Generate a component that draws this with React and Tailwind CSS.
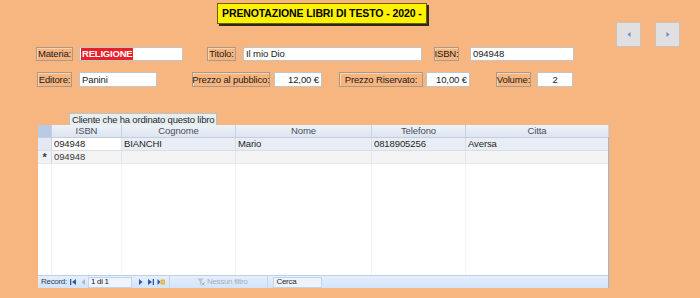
import React from "react";

const Label = ({ children, w }) => (
  <div
    className={`${w} h-full flex items-center justify-center bg-[#f6b47f] border border-[#a99a8c] shadow-[inset_1px_1px_0_#fbd3b0] text-[9.5px] tracking-[-0.15px] leading-none text-[#202020] whitespace-nowrap`}
  >
    {children}
  </div>
);

const Box = ({ children, w, align = "text-left" }) => (
  <div
    className={`${w} h-full bg-white border border-[#c4c4c4] flex items-center px-[2px] text-[9.5px] tracking-[-0.1px] leading-none text-[#202020] whitespace-nowrap ${align}`}
  >
    <span className="w-full">{children}</span>
  </div>
);

const cols = "grid grid-cols-[14px_70px_114px_136px_94px_143px]";

function NavIcon({ type }) {
  const blue = "#2f5aa8";
  if (type === "first")
    return (
      <svg width="7" height="6" viewBox="0 0 7 6">
        <rect x="0" y="0" width="1.3" height="6" fill={blue} />
        <path d="M6 0 L2 3 L6 6 Z" fill={blue} />
      </svg>
    );
  if (type === "prev")
    return (
      <svg width="5" height="6" viewBox="0 0 5 6">
        <path d="M4 0 L0.5 3 L4 6 Z" fill="#a9b8cf" />
      </svg>
    );
  if (type === "next")
    return (
      <svg width="5" height="6" viewBox="0 0 5 6">
        <path d="M1 0 L4.5 3 L1 6 Z" fill={blue} />
      </svg>
    );
  if (type === "last")
    return (
      <svg width="7" height="6" viewBox="0 0 7 6">
        <path d="M1 0 L5 3 L1 6 Z" fill={blue} />
        <rect x="5.7" y="0" width="1.3" height="6" fill={blue} />
      </svg>
    );
  return (
    <svg width="8" height="6" viewBox="0 0 8 6">
      <path d="M0.5 0 L3.5 3 L0.5 6 Z" fill={blue} />
      <rect x="4" y="1" width="4" height="4" fill="#f2c94c" stroke="#c99a1a" strokeWidth="0.6" />
    </svg>
  );
}

export default function App() {
  return (
    <div className="w-[700px] h-[298px] bg-[#f7b57f] overflow-hidden font-['Liberation_Sans',Arial,sans-serif]">
      {/* header */}
      <div className="h-[47px] flex items-start">
        <div className="ml-[217px] mt-[3px] w-[210px] h-[21px] bg-[#fff200] border border-[#6b6300] shadow-[2px_2px_0_#2e2a22] flex items-center pl-[4px]">
          <span className="text-[10.5px] font-bold tracking-[-0.1px] text-black whitespace-nowrap">
            PRENOTAZIONE LIBRI DI TESTO - 2020 -
          </span>
        </div>
        <div className="ml-auto mr-[20px] mt-[22px] flex gap-[14px]">
          <div className="w-[25px] h-[25px] bg-[#e0e0e0] border border-[#cbc3bb] flex items-center justify-center">
            <svg width="4" height="5" viewBox="0 0 4 5">
              <path d="M3.5 0 L0.5 2.5 L3.5 5 Z" fill="#6d86c8" />
            </svg>
          </div>
          <div className="w-[25px] h-[25px] bg-[#e0e0e0] border border-[#cbc3bb] flex items-center justify-center">
            <svg width="4" height="5" viewBox="0 0 4 5">
              <path d="M0.5 0 L3.5 2.5 L0.5 5 Z" fill="#6d86c8" />
            </svg>
          </div>
        </div>
      </div>

      {/* row 1 */}
      <div className="h-[14px] flex pl-[36px]">
        <Label w="w-[37px]">Materia:</Label>
        <div className="ml-[6px] w-[104px] h-full bg-white border border-[#c4c4c4] flex items-center px-[1px]">
          <span className="bg-[#e8202a] text-white font-bold text-[9.5px] leading-[12px] px-[1px] tracking-[-0.2px]">
            RELIGIONE
          </span>
        </div>
        <div className="ml-[24px] h-full flex">
          <Label w="w-[29px]">Titolo:</Label>
        </div>
        <div className="ml-[7px] h-full flex">
          <Box w="w-[179px]">Il mio Dio</Box>
        </div>
        <div className="ml-[12px] h-full flex">
          <Label w="w-[25px]">ISBN:</Label>
        </div>
        <div className="ml-[11px] h-full flex">
          <Box w="w-[104px]">094948</Box>
        </div>
      </div>

      {/* row 2 */}
      <div className="mt-[11px] h-[15px] flex pl-[37px]">
        <Label w="w-[35px]">Editore:</Label>
        <div className="ml-[7px] h-full flex">
          <Box w="w-[78px]">Panini</Box>
        </div>
        <div className="ml-[35px] h-full flex">
          <Label w="w-[78px]">Prezzo al pubblico:</Label>
        </div>
        <div className="ml-[4px] h-full flex">
          <Box w="w-[48px]" align="text-right">12,00 €</Box>
        </div>
        <div className="ml-[17px] h-full flex">
          <Label w="w-[84px]">Prezzo Riservato:</Label>
        </div>
        <div className="ml-[3px] h-full flex">
          <Box w="w-[44px]" align="text-right">10,00 €</Box>
        </div>
        <div className="ml-[26px] h-full flex">
          <Label w="w-[35px]">Volume:</Label>
        </div>
        <div className="ml-[6px] h-full flex">
          <Box w="w-[36px]" align="text-center">2</Box>
        </div>
      </div>

      {/* subform caption */}
      <div className="mt-[26px] ml-[69px] w-[148px] h-[12px] bg-[#e6eeee] border-t border-l border-r border-[#b9c3c6] flex items-center pl-[2px]">
        <span className="text-[9.5px] tracking-[-0.2px] leading-none text-[#1e2a33] whitespace-nowrap">
          Cliente che ha ordinato questo libro
        </span>
      </div>

      {/* datasheet */}
      <div className="ml-[38px] w-[571px] h-[163px] bg-white border-r border-[#9fb6d6] flex flex-col text-[9.5px] tracking-[-0.1px] leading-none">
        <div className={`${cols} h-[13px] bg-gradient-to-b from-[#eef2f9] to-[#dde5f1] border-b border-[#c3cede] text-[#4a505c]`}>
          <div className="bg-[#b8cae6] border-r border-[#c3cede]" />
          {["ISBN", "Cognome", "Nome", "Telefono", "Citta"].map((h) => (
            <div key={h} className="border-r border-[#c8d1df] flex items-center justify-center">
              {h}
            </div>
          ))}
        </div>
        <div className={`${cols} h-[13px] bg-[#e9edf6] border-b border-[#d8dde8] text-[#1f1f1f]`}>
          <div className="bg-[#e3e8f2] border-r border-[#d0d7e4]" />
          <div className="bg-white border-r border-[#d8dde8] flex items-center pl-[2px]">094948</div>
          <div className="border-r border-[#d8dde8] flex items-center pl-[2px]">BIANCHI</div>
          <div className="border-r border-[#d8dde8] flex items-center pl-[2px]">Mario</div>
          <div className="border-r border-[#d8dde8] flex items-center pl-[2px]">0818905256</div>
          <div className="flex items-center pl-[2px]">Aversa</div>
        </div>
        <div className={`${cols} h-[13px] bg-[#f4f4f5] border-b border-[#e6e8ec] text-[#3a3a3a]`}>
          <div className="bg-[#eef1f6] border-r border-[#d0d7e4] flex items-center justify-center text-[11px] font-bold">*</div>
          <div className="border-r border-[#e3e6ec] flex items-center pl-[2px]">094948</div>
          <div className="border-r border-[#e3e6ec]" />
          <div className="border-r border-[#e3e6ec]" />
          <div className="border-r border-[#e3e6ec]" />
          <div />
        </div>
        <div className={`${cols} flex-1`}>
          <div className="bg-white border-r border-[#eef0f3]" />
          <div className="border-r border-[#f1f2f4]" />
          <div className="border-r border-[#f1f2f4]" />
          <div className="border-r border-[#f1f2f4]" />
          <div className="border-r border-[#f1f2f4]" />
          <div />
        </div>
        {/* record navigator */}
        <div className="h-[13px] bg-gradient-to-b from-[#e6effb] to-[#d2e3f9] border-t border-[#bcd0ea] flex items-center text-[8px] tracking-[-0.3px] text-[#2d3f5c]">
          <span className="ml-[3px]">Record:</span>
          <span className="ml-[3px] flex"><NavIcon type="first" /></span>
          <span className="ml-[4px] flex"><NavIcon type="prev" /></span>
          <div className="ml-[2px] w-[44px] h-[11px] bg-[#eef4fd] border border-[#c3d3ea] flex items-center pl-[2px] text-[#1a1a1a]">
            1 di 1
          </div>
          <span className="ml-[6px] flex"><NavIcon type="next" /></span>
          <span className="ml-[4px] flex"><NavIcon type="last" /></span>
          <span className="ml-[3px] flex"><NavIcon type="new" /></span>
          <div className="ml-[4px] w-px h-full bg-[#c7d6ea]" />
          <svg className="ml-[27px]" width="8" height="8" viewBox="0 0 8 8">
            <path d="M0.5 0.5 H6.5 L4.2 3.6 V7 L2.8 6 V3.6 Z" fill="#b9c2cf" />
            <path d="M4.6 4.4 L7.6 7.4 M7.6 4.4 L4.6 7.4" stroke="#9aa5b5" strokeWidth="0.9" />
          </svg>
          <span className="ml-[2px] text-[#a6afbd]">Nessun filtro</span>
          <div className="ml-[20px] w-px h-full bg-[#c7d6ea]" />
          <div className="ml-[5px] w-[49px] h-[11px] bg-[#edf3fc] border border-[#c3d3ea] flex items-center pl-[2px] text-[#2a2a2a]">
            Cerca
          </div>
        </div>
      </div>
    </div>
  );
}
